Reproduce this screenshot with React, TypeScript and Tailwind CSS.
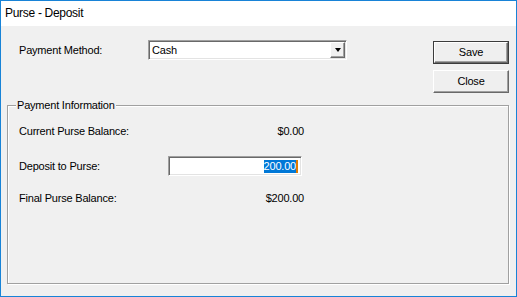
import { useState } from 'react'

const sunken = 'border border-t-[#a0a0a0] border-l-[#a0a0a0] border-b-white border-r-white shadow-[inset_1px_1px_0_#696969,inset_-1px_-1px_0_#e3e3e3]'
const raised = 'border border-t-white border-l-white border-b-[#696969] border-r-[#696969] shadow-[inset_-1px_-1px_0_#a0a0a0]'

function Row({ label, children, className }: { label: string; children: React.ReactNode; className: string }) {
  return (
    <div className={`flex h-[20px] items-center ${className}`}>
      <div className="w-[160px] pl-[11px]">{label}</div>
      {children}
    </div>
  )
}

export default function App() {
  const [method] = useState('Cash')

  return (
    <div
      className="flex h-[297px] w-[517px] flex-col border border-[#1883d7] bg-[#f0f0f0] text-[11px] leading-[13px] tracking-[-0.2px] text-black"
      style={{ fontFamily: '"Liberation Sans", Arial, sans-serif' }}
    >
      <div className="flex h-[25px] items-center bg-white pl-[4px] text-[12px] tracking-[-0.3px]">Purse - Deposit</div>

      <div className="flex">
        <div className="flex pt-[14px]">
          <div className="ml-[18px] flex h-[20px] w-[129px] items-center">Payment Method:</div>
          <div className={`flex h-[20px] w-[199px] items-center bg-white ${sunken}`}>
            <span className="flex-1 pl-[3px]">{method}</span>
            <div className={`mr-[1px] flex h-[16px] w-[15px] items-center justify-center bg-[#f0f0f0] ${raised}`}>
              <div className="h-0 w-0 border-x-[3.5px] border-t-[4px] border-x-transparent border-t-black" />
            </div>
          </div>
        </div>
        <div className="flex-1" />
        <div className="mr-[7px] mt-[15px] flex flex-col gap-[6px]">
          <div className="border border-[#3c3c3c]">
            <div className={`flex h-[21px] w-[74px] items-center justify-center bg-[#efefef] ${raised}`}>Save</div>
          </div>
          <div className={`flex h-[23px] w-[76px] items-center justify-center bg-[#efefef] ${raised}`}>Close</div>
        </div>
      </div>

      <div className="relative ml-[6px] mt-[12px] h-[179px] w-[502px] border border-[#a0a0a0] shadow-[inset_1px_1px_0_#fff,1px_1px_0_#fff]">
        <span className="absolute left-[8px] top-[-7px] bg-[#f0f0f0] px-[1px]">Payment Information</span>
        <Row label="Current Purse Balance:" className="mt-[15px]">
          <div className="w-[136px] text-right">$0.00</div>
        </Row>
        <Row label="Deposit to Purse:" className="mt-[15px]">
          <div className={`flex h-[20px] w-[134px] items-center justify-end bg-white pr-[3px] ${sunken}`}>
            <span className="bg-[#0078d7] text-white">200.00</span>
            <span className="h-[13px] w-[2px] bg-[#e07b00]" />
          </div>
        </Row>
        <Row label="Final Purse Balance:" className="mt-[12px]">
          <div className="w-[136px] text-right">$200.00</div>
        </Row>
      </div>
    </div>
  )
}
